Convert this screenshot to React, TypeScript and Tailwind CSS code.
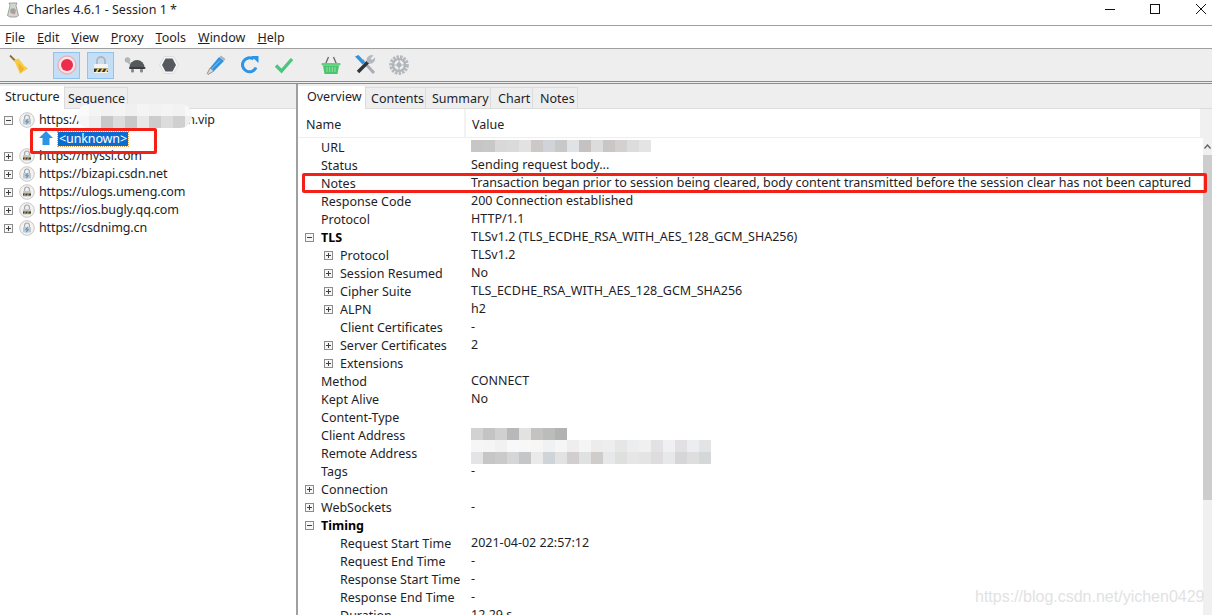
const FONT = "font-['Noto_Sans',sans-serif]";

type Row = {
  name: string;
  value?: string;
  indent?: 0 | 1;
  toggle?: "plus" | "minus";
  bold?: boolean;
  blur?: string[][];
};

const URL_BLUR = [
  ["#c8c5c5", "#c8c8c8", "#d8d8d8", "#dadada", "#e2e2e2", "#cdc8c8", "#d0d4d8", "#c8c8c8", "#dfe3e5", "#c6c2c2", "#dcdcdc", "#cbc6c6", "#d4d0d0", "#dcdcdc", "#e4e4e4"],
];
const CLIENT_BLUR = [["#d2d2d0", "#c4c4c6", "#d0d0ce", "#b8b8ba", "#e2e2e0", "#c4c2c2", "#bcbcba", "#b2b2b2"]];
const REMOTE_BLUR = [
  ["#f6f6f6", "#f5f5f5", "#f1f1f1", "#f8f8f8", "#f8f8f8", "#f6f6f4", "#eff1f3", "#f6f6f6", "#eeeeee", "#f5f5f5", "#ececec", "#eeeeee", "#e6e6e6", "#ebedef", "#f0f0f0", "#e2e2e4", "#f0f0f2", "#e2e0e2", "#ebedf0", "#e4e4e4"],
  ["#e4e4e6", "#c6c6c6", "#cacaca", "#d4d6d8", "#c6c6c6", "#eaeaea", "#ced4d8", "#e2e2e2", "#d2cdcf", "#e0e2e2", "#cfcccc", "#e6e8ea", "#dfe0de", "#e6e6e6", "#e4e4e4", "#dedcdc", "#e6e8ea", "#d6d6d8", "#dedede", "#d4d8d8"],
];
const HOST_BLUR = [
  ["#fafafa", "#f4f4f4", "#f2f2f2", "#f4f4f4", "#f0f0f0", "#f4f4f4", "#f2f2f2", "#f4f4f4", "#f2f2f2", "#f8f8f8"],
  ["#f6f6f6", "#eeeeee", "#c8c8c8", "#dcdcdc", "#c8c8c8", "#e8e8e8", "#cccccc", "#dcdcdc", "#d0d0d0", "#eeeeee"],
];

const ROWS: Row[] = [
  { name: "URL", blur: URL_BLUR },
  { name: "Status", value: "Sending request body..." },
  { name: "Notes", value: "Transaction began prior to session being cleared, body content transmitted before the session clear has not been captured" },
  { name: "Response Code", value: "200 Connection established" },
  { name: "Protocol", value: "HTTP/1.1" },
  { name: "TLS", value: "TLSv1.2 (TLS_ECDHE_RSA_WITH_AES_128_GCM_SHA256)", toggle: "minus", bold: true },
  { name: "Protocol", value: "TLSv1.2", indent: 1, toggle: "plus" },
  { name: "Session Resumed", value: "No", indent: 1, toggle: "plus" },
  { name: "Cipher Suite", value: "TLS_ECDHE_RSA_WITH_AES_128_GCM_SHA256", indent: 1, toggle: "plus" },
  { name: "ALPN", value: "h2", indent: 1, toggle: "plus" },
  { name: "Client Certificates", value: "-", indent: 1 },
  { name: "Server Certificates", value: "2", indent: 1, toggle: "plus" },
  { name: "Extensions", indent: 1, toggle: "plus" },
  { name: "Method", value: "CONNECT" },
  { name: "Kept Alive", value: "No" },
  { name: "Content-Type" },
  { name: "Client Address", blur: CLIENT_BLUR },
  { name: "Remote Address", blur: REMOTE_BLUR },
  { name: "Tags", value: "-" },
  { name: "Connection", toggle: "plus" },
  { name: "WebSockets", value: "-", toggle: "plus" },
  { name: "Timing", toggle: "minus", bold: true },
  { name: "Request Start Time", value: "2021-04-02 22:57:12", indent: 1 },
  { name: "Request End Time", value: "-", indent: 1 },
  { name: "Response Start Time", value: "-", indent: 1 },
  { name: "Response End Time", value: "-", indent: 1 },
];

const HOSTS = [
  { host: "https://myssi.com", secure: false },
  { host: "https://bizapi.csdn.net", secure: true },
  { host: "https://ulogs.umeng.com", secure: false },
  { host: "https://ios.bugly.qq.com", secure: false },
  { host: "https://csdnimg.cn", secure: true },
];

const MENU = [
  ["F", "ile"],
  ["E", "dit"],
  ["V", "iew"],
  ["P", "roxy"],
  ["T", "ools"],
  ["W", "indow"],
  ["H", "elp"],
];

function Toggle({ kind }: { kind: "plus" | "minus" }) {
  return (
    <svg width="9" height="9" viewBox="0 0 9 9" className="shrink-0">
      <rect x="0.5" y="0.5" width="8" height="8" fill="#f6f6f6" stroke="#8c8c8c" />
      <path d="M2 4.5h5" stroke="#404040" />
      {kind === "plus" && <path d="M4.5 2v5" stroke="#404040" />}
    </svg>
  );
}

function HostIcon({ secure }: { secure: boolean }) {
  return (
    <svg width="16" height="16" viewBox="0 0 16 16" className="shrink-0">
      <circle cx="8" cy="8" r="7.300" fill="#f2f2f2" stroke="#c8c8c8" />
      <path d="M5.600 7V5.400a2.400 2.400 0 0 1 4.800 0V7" fill="none" stroke="#a8a8a8" strokeWidth="1.200" />
      <rect x="4" y="7" width="8" height="5.500" rx="0.600" fill="#c4c6c8" />
      {secure ? (
        <path d="M9 6.200 5.800 9.800h1.900L7 13l3.200-3.800H8.300z" fill="#3f9ae4" />
      ) : (
        <>
          <path d="M4 9.500h8v2H4z" fill="#3c3a30" />
          <path d="M5 11.500 6 9.500h1l-1 2zM8 11.500 9 9.500h1l-1 2z" fill="#e8c840" />
        </>
      )}
    </svg>
  );
}

function Mosaic({ cells, className }: { cells: string[][]; className?: string }) {
  return (
    <div className={`flex flex-col ${className ?? ""}`}>
      {cells.map((line, i) => (
        <div key={i} className="flex h-3">
          {line.map((c, j) => (
            <span key={j} className="w-3 h-3 shrink-0" style={{ backgroundColor: c }} />
          ))}
        </div>
      ))}
    </div>
  );
}

function Broom() {
  return (
    <svg width="20" height="20" viewBox="0 0 20 20">
      <path d="M1 .5 6.500 6" stroke="#8a6a3a" strokeWidth="1.800" />
      <path d="M5 5 9.500 3.500 15.500 11 19 13.500 15 16 11 19 9.500 15.500z" fill="#f7cc45" />
      <path d="M9.500 8 15 13.500 12 17.500 10 14z" fill="#eeb22c" />
    </svg>
  );
}

function Record() {
  return (
    <svg width="20" height="20" viewBox="0 0 20 20">
      <circle cx="10" cy="10" r="9" fill="#f6e8ea" stroke="#eeb0b8" strokeWidth="1.400" />
      <circle cx="10" cy="10" r="6" fill="#ee2c4c" />
    </svg>
  );
}

function Throttle() {
  return (
    <svg width="16" height="18" viewBox="0 0 16 18">
      <path d="M4 8V5a4 4 0 0 1 8 0v3" fill="none" stroke="#b4b4b8" strokeWidth="1.800" />
      <rect x="1" y="8" width="14" height="9" rx="1" fill="#f4f4f4" />
      <rect x="1" y="12.500" width="14" height="3.500" fill="#34322a" />
      <path d="M2.500 16 4.500 12.500h2L4.500 16zM7 16 9 12.500h2L9 16zM11.500 16 13.500 12.500h1.500V14L14 16z" fill="#f0d040" />
    </svg>
  );
}

function Turtle() {
  return (
    <svg width="22" height="18" viewBox="0 0 22 18">
      <circle cx="3.500" cy="4" r="2.800" fill="#b4b6b2" />
      <path d="M4 6 8 9" stroke="#b4b6b2" strokeWidth="2" />
      <path d="M5.500 11.500a7.500 7.500 0 0 1 15 0z" fill="#55595c" />
      <rect x="5" y="11" width="16.500" height="2" rx="1" fill="#3a3d40" />
      <rect x="7" y="13" width="3" height="3.500" rx="1" fill="#8a8a86" />
      <rect x="16" y="13" width="3" height="3.500" rx="1" fill="#8a8a86" />
    </svg>
  );
}

function Stop() {
  return (
    <svg width="20" height="18" viewBox="0 0 20 18">
      <path d="M5.500 .5h9L19.500 9l-5 8.500h-9L.5 9z" fill="#f6f6f6" stroke="#dcdce0" />
      <path d="M6.500 2.500h7L17 9l-3.500 6.500h-7L3 9z" fill="#55595f" />
    </svg>
  );
}

function Pen() {
  return (
    <svg width="22" height="22" viewBox="0 0 22 22">
      <path d="M14 3 19 7 9 17 5 14z" fill="#2f94e0" />
      <path d="M16 1.500 20.500 5 19 7 14.500 3.200z" fill="#b0b4b8" />
      <path d="M5 14 9 17 3 20.500 2.200 19.500z" fill="#d8d8d8" stroke="#70757a" strokeWidth="0.700" />
      <path d="M6.500 15 15 6.500" stroke="#8cc8f4" strokeWidth="1" />
    </svg>
  );
}

function Refresh() {
  return (
    <svg width="20" height="20" viewBox="0 0 20 20">
      <path d="M16 12.500A7 7 0 1 1 13.500 4" fill="none" stroke="#2b94e4" strokeWidth="3" />
      <path d="M11 1h7.500v7z" fill="#2b94e4" />
    </svg>
  );
}

function Tick() {
  return (
    <svg width="20" height="18" viewBox="0 0 20 18">
      <path d="M2 9.500 7.500 15 18 3" fill="none" stroke="#4fc47c" strokeWidth="3.400" />
    </svg>
  );
}

function Basket() {
  return (
    <svg width="20" height="20" viewBox="0 0 20 20">
      <path d="M4.500 9 7.500 2M15.500 9 12.500 2" stroke="#666" strokeWidth="1.300" />
      <rect x="0.500" y="8" width="19" height="2.500" rx="1" fill="#5fd07e" />
      <path d="M2 10.500h16L16.500 19h-13z" fill="#4cc46c" />
      <path d="M6 12v5M8.700 12v5M11.300 12v5M14 12v5" stroke="#8ee4a6" strokeWidth="1" />
    </svg>
  );
}

function Tools() {
  return (
    <svg width="22" height="22" viewBox="0 0 22 22">
      <path d="M8 6 20 19" stroke="#a9adb3" strokeWidth="3" />
      <path d="M15 7 4 18" stroke="#2f3438" strokeWidth="3.400" />
      <path d="M1 2.500 4.500 1l6.500 7-2.500 2.500z" fill="#2f94e0" />
      <path d="M13 8a5 5 0 0 1 6.500-6.500L16.500 4.500 18 6l3-2.500A5 5 0 0 1 15 9.500z" fill="#b4b8be" />
    </svg>
  );
}

function Gear() {
  return (
    <svg width="20" height="20" viewBox="0 0 20 20">
      <circle cx="10" cy="10" r="8" fill="none" stroke="#b4b8bc" strokeWidth="3.600" strokeDasharray="2.400 1.100" />
      <circle cx="10" cy="10" r="6" fill="none" stroke="#b0b4b8" strokeWidth="2.200" />
      <circle cx="10" cy="10" r="2.400" fill="#b0b4b8" />
      <path d="M10 4v12M4 10h12" stroke="#b0b4b8" strokeWidth="1.200" />
    </svg>
  );
}

export default function App() {
  return (
    <div className={`${FONT} relative w-[1212px] h-[615px] overflow-hidden bg-white text-[12.5px] leading-[18px] text-[#1e1e28]`}>
      {/* title bar */}
      <div className="flex items-center h-[25px] border-b border-[#a0a0a0] box-content">
        <svg width="14" height="16" viewBox="0 0 14 16" className="ml-[6px] mr-[6px] -mt-[5px] shrink-0">
          <path d="M3 1h8l-1 2.500 2.500 10L10 15H4l-2.500-1.500L4 3.500z" fill="#d4d4d0" stroke="#8f8f8a" strokeWidth="0.800" />
          <circle cx="7" cy="9" r="2.800" fill="#9aa89a" />
          <circle cx="8" cy="11" r="1.200" fill="#d88aa0" />
        </svg>
        <span className="-mt-[5px]">Charles 4.6.1 - Session 1 *</span>
        <div className="ml-auto flex items-start pt-[3px] h-full">
          <svg width="12" height="12" viewBox="0 0 12 12" className="mr-[33px]"><path d="M1 6.500h10" stroke="#111" /></svg>
          <svg width="12" height="12" viewBox="0 0 12 12" className="mr-[34px]"><rect x="1.500" y="1.500" width="9" height="9" fill="none" stroke="#111" /></svg>
          <svg width="12" height="12" viewBox="0 0 12 12" className="mr-[5px]"><path d="M1 1l10 10M11 1 1 11" stroke="#111" /></svg>
        </div>
      </div>

      {/* menu bar */}
      <div className="flex items-center gap-[12px] h-[20px] pl-[5px] pt-[2px] border-b border-[#a0a0a0] box-content">
        {MENU.map(([key, rest]) => (
          <span key={key}>
            <span className="underline">{key}</span>
            {rest}
          </span>
        ))}
      </div>

      {/* toolbar */}
      <div className="flex items-center h-[32px] bg-[#eeeeee] border-b-[3px] border-double border-[#8c8c8c] box-content">
        <div className="w-[20px] ml-[9px] flex justify-center"><Broom /></div>
        <div className="ml-[24px] w-[27px] h-[27px] flex items-center justify-center bg-[#c4dff5] border border-[#90c4ee]"><Record /></div>
        <div className="ml-[7px] w-[27px] h-[27px] flex items-center justify-center bg-[#c4dff5] border border-[#90c4ee]"><Throttle /></div>
        <div className="ml-[10px]"><Turtle /></div>
        <div className="ml-[13px]"><Stop /></div>
        <div className="ml-[26px]"><Pen /></div>
        <div className="ml-[13px]"><Refresh /></div>
        <div className="ml-[14px]"><Tick /></div>
        <div className="ml-[27px]"><Basket /></div>
        <div className="ml-[13px]"><Tools /></div>
        <div className="ml-[13px]"><Gear /></div>
      </div>

      <div className="flex h-[531px]">
        {/* structure pane */}
        <div className="w-[296px] shrink-0 border-r-2 border-[#a0a0a0] box-content relative">
          <div className="flex items-end h-[25px] bg-[#eeeeee] border-b border-[#dcdcdc]">
            <div className="w-[65px] h-[23px] -mb-px bg-white border-r border-[#dcdcdc] pl-[5px] pt-[2px]">Structure</div>
            <div className="w-[63px] h-[21px] border-t border-r border-[#dcdcdc] pl-[3px] pt-[2px]">Sequence</div>
          </div>
          <div className="pt-[2px] tracking-[-0.12px]">
            <div className="flex items-center h-[18px] pl-[4px]">
              <Toggle kind="minus" />
              <span className="ml-[6px] flex"><HostIcon secure /></span>
              <span className="ml-[4px]">https://</span>
              <span className="ml-[106px]">n.vip</span>
            </div>
            <div className="flex items-center h-[18px] pl-[39px]">
              <svg width="14" height="14" viewBox="0 0 14 14" className="shrink-0">
                <path d="M7 0 14 7H10.500V14H3.500V7H0z" fill="#2b94e4" />
              </svg>
              <span className="ml-[5px] mt-[2px] px-[1px] h-[14px] leading-[14px] bg-[#0a6cd0] text-white outline-1 outline-dotted outline-[#e0a050]">&lt;unknown&gt;</span>
            </div>
            {HOSTS.map((h) => (
              <div key={h.host} className="flex items-center h-[18px] pl-[4px]">
                <Toggle kind="plus" />
                <span className="ml-[6px] flex"><HostIcon secure={h.secure} /></span>
                <span className="ml-[4px]">{h.host}</span>
              </div>
            ))}
          </div>
          {/* blurred host and red marker painted over the tree */}
          <div className="absolute left-[77px] top-[20px] w-[115px] h-[24px] rounded-full overflow-hidden">
            <Mosaic cells={HOST_BLUR} />
          </div>
          <div className="absolute left-[30px] top-[44px] w-[127px] h-[26px] border-[3px] border-[#f52015] rounded-[2px]" />
        </div>

        {/* detail pane */}
        <div className="flex-1 min-w-0 relative">
          <div className="flex items-end h-[25px] bg-[#eeeeee] border-b border-[#dcdcdc]">
            <div className="w-[68px] h-[23px] -mb-px bg-white border-r border-[#dcdcdc] pl-[9px] pt-[2px]">Overview</div>
            <div className="w-[60px] h-[21px] border-t border-r border-[#dcdcdc] pl-[5px] pt-[2px]">Contents</div>
            <div className="w-[65px] h-[21px] border-t border-r border-[#dcdcdc] pl-[6px] pt-[2px]">Summary</div>
            <div className="w-[42px] h-[21px] border-t border-r border-[#dcdcdc] pl-[7px] pt-[2px]">Chart</div>
            <div className="w-[45px] h-[21px] border-t border-r border-[#dcdcdc] pl-[7px] pt-[2px]">Notes</div>
          </div>
          <div className="flex h-[29px] items-center border-b border-[#eeeeee]">
            <div className="w-[168px] h-full flex items-center pl-[8px] pt-[4px] border-r-2 border-[#f2f2f2]">Name</div>
            <div className="pl-[6px] pt-[4px]">Value</div>
            <div className="ml-auto w-[12px] h-full bg-[#f0f0f0]" />
          </div>
          <div className="flex h-[477px]">
            <div className="flex-1 min-w-0">
              {ROWS.map((r, i) => (
                <div key={i} className="flex items-center h-[18px]">
                  <div className={`relative shrink-0 w-[173px] pt-[2px] ${r.indent ? "pl-[42px]" : "pl-[23px]"} ${r.bold ? "font-bold text-black" : ""}`}>
                    {r.toggle && (
                      <span className={`absolute top-[6px] ${r.indent ? "left-[26px]" : "left-[7px]"} flex`}>
                        <Toggle kind={r.toggle} />
                      </span>
                    )}
                    {r.name}
                  </div>
                  {r.blur ? (
                    <Mosaic cells={r.blur} className="-mt-[2px]" />
                  ) : (
                    <span className="whitespace-nowrap">{r.value}</span>
                  )}
                </div>
              ))}
              <div className="flex items-start h-[9px] overflow-hidden">
                <div className="shrink-0 w-[173px] pl-[42px] pt-[1px]">Duration</div>
                <span>12.29 s</span>
              </div>
            </div>
            {/* scrollbar */}
            <div className="w-[9px] shrink-0 flex flex-col bg-[#f0f0f0]">
              <div className="h-[17px] flex items-center justify-center">
                <svg width="7" height="5" viewBox="0 0 7 5"><path d="M.5 4.500 3.500 1l3 3.500" fill="none" stroke="#606060" strokeWidth="1.300" /></svg>
              </div>
              <div className="h-[345px] bg-[#cdcdcd]" />
            </div>
          </div>
          <div className="absolute left-[4px] top-[89px] w-[905px] h-[20px] border-[3px] border-[#f52015] rounded-[2px]" />
        </div>
      </div>

      {/* blog watermark */}
      <div className="absolute left-[975px] top-[587px] font-['Liberation_Sans',sans-serif] text-[16px] leading-[20px] text-[#e2e2e2] whitespace-nowrap">
        https://blog.csdn.net/yichen0429
      </div>
    </div>
  );
}
